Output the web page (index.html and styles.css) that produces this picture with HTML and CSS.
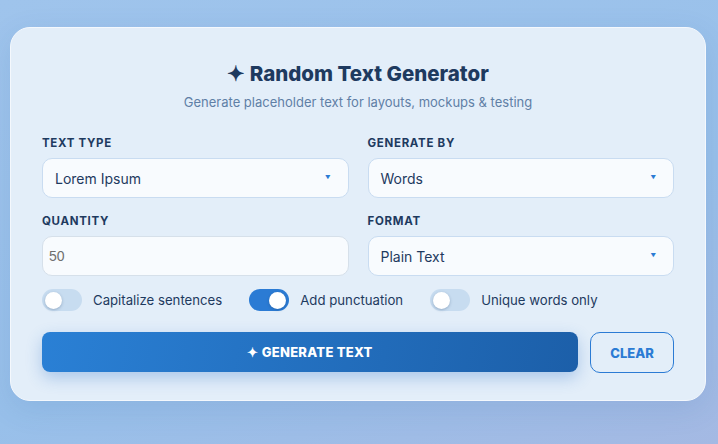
FILE: index.html
```html
<!DOCTYPE html>
<html lang="en">
<head>
<meta charset="utf-8">
<title>Random Text Generator</title>
<link rel="stylesheet" href="styles.css">
</head>
<body>
<main class="card">
  <h1 class="title">✦ Random Text Generator</h1>
  <p class="subtitle">Generate placeholder text for layouts, mockups &amp; testing</p>
  <div class="grid">
    <div class="field">
      <label class="label">Text Type</label>
      <div class="select"><span>Lorem Ipsum</span><span class="arrow">▼</span></div>
    </div>
    <div class="field">
      <label class="label">Generate By</label>
      <div class="select"><span>Words</span><span class="arrow">▼</span></div>
    </div>
    <div class="field">
      <label class="label">Quantity</label>
      <div class="input">50</div>
    </div>
    <div class="field">
      <label class="label">Format</label>
      <div class="select"><span>Plain Text</span><span class="arrow">▼</span></div>
    </div>
  </div>
  <div class="toggles">
    <div class="toggle-item"><span class="switch"><span class="knob"></span></span><span>Capitalize sentences</span></div>
    <div class="toggle-item"><span class="switch on"><span class="knob"></span></span><span>Add punctuation</span></div>
    <div class="toggle-item"><span class="switch"><span class="knob"></span></span><span>Unique words only</span></div>
  </div>
  <div class="actions">
    <button class="btn-primary">✦ Generate Text</button>
    <button class="btn-secondary">Clear</button>
  </div>
</main>
</body>
</html>
```
FILE: styles.css
```css
* { box-sizing: border-box; }
html, body { height: 100%; }
body {
  margin: 0;
  padding: 27px 12px 0 10px;
  background: linear-gradient(160deg, #9fc4ec 0%, #98c0ea 60%, #a4b9e3 100%);
  font-family: Inter, "Noto Sans", sans-serif;
  color: #1e3a5f;
  overflow: hidden;
}
.card {
  width: 696px;
  background: #e3eef9;
  border: 1px solid #f4f8fd;
  border-radius: 20px;
  padding: 31px 31px 27px;
  box-shadow: 0 8px 30px rgba(40, 90, 160, 0.12);
}
.title {
  margin: 0;
  text-align: center;
  font-size: 20.5px;
  line-height: 30px;
  font-weight: 800;
  color: #1e3a5f;
}
.subtitle {
  margin: 4px 0 0;
  text-align: center;
  font-size: 13px;
  line-height: 18px;
  color: #5f7fa6;
}
.grid {
  margin-top: 24px;
  display: grid;
  grid-template-columns: 1fr 1fr;
  column-gap: 19px;
  row-gap: 15px;
}
.field { display: flex; flex-direction: column; gap: 7px; }
.label {
  font-size: 11.5px;
  line-height: 16px;
  font-weight: 700;
  text-transform: uppercase;
  letter-spacing: 0.06em;
  color: #1e3a5f;
}
.select, .input {
  height: 40px;
  border-radius: 10px;
  background: #f8fbfe;
  border: 1px solid #c9dcf1;
  display: flex;
  align-items: center;
}
.select {
  justify-content: space-between;
  padding: 0 17px 0 12px;
  font-size: 14px;
  color: #1e3a5f;
}
.arrow { font-size: 5.5px; color: #2b7bd4; }
.input {
  padding: 0 6px;
  font-family: "Liberation Sans", Arial, sans-serif;
  font-size: 14px;
  color: #6f6f6f;
  border-color: #d6e0ea;
}
.toggles {
  margin-top: 13px;
  display: flex;
  align-items: center;
  gap: 27px;
}
.toggle-item {
  display: flex;
  align-items: center;
  gap: 11px;
  font-size: 13.2px;
  color: #1e3a5f;
}
.switch {
  width: 40px;
  height: 22px;
  border-radius: 11px;
  background: #c7dcf0;
  display: flex;
  align-items: center;
  padding: 0 3px;
}
.switch.on { background: #2b7bd4; justify-content: flex-end; }
.knob {
  width: 17px;
  height: 17px;
  border-radius: 50%;
  background: #fff;
  box-shadow: 0 1px 3px rgba(30, 60, 100, 0.3);
}
.actions {
  margin-top: 21px;
  display: flex;
  gap: 12px;
}
.btn-primary {
  flex: 1;
  height: 40px;
  border: 0;
  border-radius: 8px;
  background: linear-gradient(100deg, #2a80d5 0%, #1c5fa9 100%);
  color: #fff;
  font-family: inherit;
  font-weight: 800;
  font-size: 13px;
  text-transform: uppercase;
  letter-spacing: 0.02em;
  box-shadow: 0 6px 16px rgba(40, 110, 200, 0.3);
}
.btn-secondary {
  width: 84px;
  height: 41px;
  border: 1.5px solid #2b7bd4;
  border-radius: 10px;
  background: transparent;
  color: #2b7bd4;
  font-family: inherit;
  font-weight: 800;
  font-size: 13px;
  text-transform: uppercase;
}
```
